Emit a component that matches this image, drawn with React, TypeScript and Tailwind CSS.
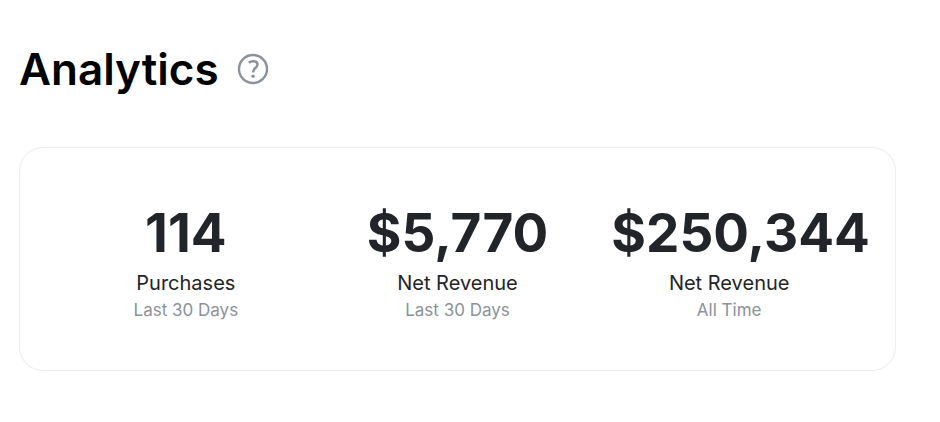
const stats = [
  { value: '114', label: 'Purchases', period: 'Last 30 Days' },
  { value: '$5,770', label: 'Net Revenue', period: 'Last 30 Days' },
  { value: '$250,344', label: 'Net Revenue', period: 'All Time' },
];

export default function App() {
  return (
    <main className="min-h-screen bg-white pt-[39px] pr-11 pb-12 pl-[19px] font-['Inter',sans-serif]">
      {/* Title */}
      <div className="flex items-center gap-[18px]">
        <h1 className="text-[44px] leading-[60px] font-semibold text-black">Analytics</h1>
        <button type="button" aria-label="Help" className="text-[#8b929a]">
          <svg width="32" height="32" viewBox="0 0 32 32" fill="none" stroke="currentColor" strokeWidth="2.4">
            <circle cx="16" cy="16" r="14" />
            <path d="M11.800 9.700C13 8.700 14.500 8.200 16.200 8.200c2.700 0 4.300 1.300 4.300 3.400 0 3.500-4.300 3.300-4.300 7.100v.8" strokeWidth="2.500" />
            <circle cx="16.100" cy="23.200" r="1.700" fill="currentColor" stroke="none" />
          </svg>
        </button>
      </div>

      {/* Stats */}
      <section className="mt-12 grid grid-cols-3 gap-9 rounded-3xl border border-[#ececee] px-12 pt-[49px] pb-[47px]">
        {stats.map((stat, i) => (
          <div key={i} className="min-w-0 text-center whitespace-nowrap">
            <p className="text-[53px] leading-[72px] font-bold text-[#212429]">{stat.value}</p>
            <p className="text-[20px] leading-7 text-[#212429]">{stat.label}</p>
            <p className="text-[17px] leading-[26px] text-[#8b929a]">{stat.period}</p>
          </div>
        ))}
      </section>
    </main>
  );
}
